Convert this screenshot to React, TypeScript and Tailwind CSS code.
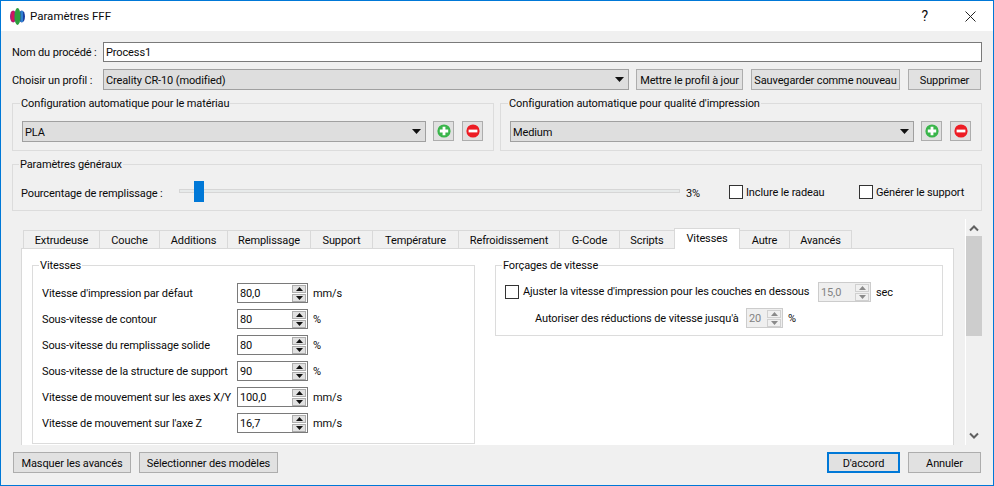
import React from "react";

function T({ className, children }: { className?: string; children: React.ReactNode }) {
  return <span className={`pt-[2px] whitespace-nowrap ${className ?? ""}`}>{children}</span>;
}

function Btn({ w, children, primary }: { w: string; children: React.ReactNode; primary?: boolean }) {
  return (
    <div className={`${w} h-[21px] shrink-0 flex items-center justify-center bg-[#e1e1e1] ${primary ? "border-2 border-[#0078d7]" : "border border-[#adadad]"}`}>
      <T>{children}</T>
    </div>
  );
}

function Tri() {
  return (
    <svg width="9" height="5" viewBox="0 0 9 5" className="shrink-0">
      <path d="M0 0H9L4.5 5Z" fill="#111" />
    </svg>
  );
}

function Combo({ w, text }: { w: string; text: string }) {
  return (
    <div className={`${w} h-[21px] shrink-0 flex items-center justify-between pl-[2px] pr-[4px] bg-[#dedede] border border-[#a0a0a0]`}>
      <T>{text}</T>
      <Tri />
    </div>
  );
}

function IconBtn({ kind }: { kind: "plus" | "minus" }) {
  return (
    <div className="w-[21px] h-[20px] shrink-0 flex items-center justify-center bg-[#e1e1e1] border border-[#adadad]">
      <svg width="14" height="14" viewBox="0 0 14 14">
        <circle cx="7" cy="7" r="6.6" fill={kind === "plus" ? "#39b54a" : "#ed1c24"} />
        {kind === "plus" ? (
          <path d="M5.6 2.8h2.8v2.8h2.8v2.8H8.4v2.8H5.6V8.4H2.8V5.6h2.8z" fill="#fff" />
        ) : (
          <rect x="2.6" y="5.6" width="8.8" height="2.8" fill="#fff" />
        )}
      </svg>
    </div>
  );
}

function Group({ title, className, bg, left, children }: { title: string; className: string; bg: string; left: string; children: React.ReactNode }) {
  return (
    <div className={`relative border ${className}`}>
      <span className={`absolute top-[-7px] ${left} ${bg} px-[1px] leading-[14px] whitespace-nowrap`}>{title}</span>
      {children}
    </div>
  );
}

function Spin({ w, value, disabled }: { w: string; value: string; disabled?: boolean }) {
  const arrow = disabled ? "#8a8a8a" : "#111";
  const bb = disabled ? "border-[#d0d0d0] bg-[#f0f0f0]" : "border-[#adadad] bg-[#e1e1e1]";
  return (
    <div className={`${w} h-[20px] shrink-0 flex items-center justify-between pl-[2px] pr-[1px] border ${disabled ? "border-[#cccccc] bg-[#efefef] text-[#838383]" : "border-[#7a7a7a] bg-white"}`}>
      <T>{value}</T>
      <div className="flex flex-col gap-[1px]">
        <div className={`w-[14px] h-[8px] flex items-center justify-center border ${bb}`}>
          <svg width="7" height="4" viewBox="0 0 7 4"><path d="M0 4H7L3.5 0Z" fill={arrow} /></svg>
        </div>
        <div className={`w-[14px] h-[8px] flex items-center justify-center border ${bb}`}>
          <svg width="7" height="4" viewBox="0 0 7 4"><path d="M0 0H7L3.5 4Z" fill={arrow} /></svg>
        </div>
      </div>
    </div>
  );
}

function Check() {
  return <div className="w-[14px] h-[14px] shrink-0 border border-[#333333] bg-white" />;
}

const speedRows = [
  ["Vitesse d'impression par défaut", "80,0", "mm/s"],
  ["Sous-vitesse de contour", "80", "%"],
  ["Sous-vitesse du remplissage solide", "80", "%"],
  ["Sous-vitesse de la structure de support", "90", "%"],
  ["Vitesse de mouvement sur les axes X/Y", "100,0", "mm/s"],
  ["Vitesse de mouvement sur l'axe Z", "16,7", "mm/s"],
];

const tabs = [
  ["Extrudeuse", "w-[76px]"],
  ["Couche", "w-[60px]"],
  ["Additions", "w-[68px]"],
  ["Remplissage", "w-[83px]"],
  ["Support", "w-[62px]"],
  ["Température", "w-[86px]"],
  ["Refroidissement", "w-[101px]"],
  ["G-Code", "w-[60px]"],
  ["Scripts", "w-[55px]"],
];

export default function App() {
  return (
    <div className="w-[994px] h-[486px] flex flex-col overflow-hidden border border-[#0078d7] bg-[#f0f0f0] text-[11px] leading-[16px] tracking-[-0.12px] text-[#0a0a0a] font-['Roboto','Noto_Sans',sans-serif]">
      <div className="h-[30px] shrink-0 bg-white flex items-center pl-[9px]">
        <svg width="15" height="17" viewBox="0 0 15 17" className="shrink-0">
          <ellipse cx="3.2" cy="8.5" rx="3.2" ry="6" fill="#a0207f" />
          <rect x="1.5" y="3.5" width="2.5" height="10" fill="#d4145a" />
          <ellipse cx="11.8" cy="8.5" rx="3.2" ry="6" fill="#1b3fa0" />
          <rect x="10.5" y="3" width="2.5" height="11" fill="#2f80d0" />
          <ellipse cx="7.5" cy="8.5" rx="3" ry="8.5" fill="#2e9e3e" />
        </svg>
        <span className="ml-[5px] text-[11.5px] tracking-normal">Paramètres FFF</span>
        <span className="ml-auto text-[14px]">?</span>
        <svg width="11" height="11" viewBox="0 0 11 11" className="ml-[37px] mr-[17px]">
          <path d="M0.5 0.5L10.5 10.5M10.5 0.5L0.5 10.5" stroke="#222" strokeWidth="1" fill="none" />
        </svg>
      </div>

      <div className="flex-1 flex flex-col px-[11px] pt-[11px] min-h-0">
        <div className="h-[20px] flex items-center">
          <T className="w-[91px] shrink-0">Nom du procédé :</T>
          <div className="flex-1 h-[20px] flex items-center pl-[2px] bg-white border border-[#7a7a7a]"><T>Process1</T></div>
        </div>

        <div className="h-[21px] mt-[7px] flex items-center">
          <T className="w-[91px] shrink-0">Choisir un profil :</T>
          <Combo w="w-[526px]" text="Creality CR-10 (modified)" />
          <div className="ml-[7px]"><Btn w="w-[107px]">Mettre le profil à jour</Btn></div>
          <div className="ml-[8px]"><Btn w="w-[149px]">Sauvegarder comme nouveau</Btn></div>
          <div className="ml-[8px]"><Btn w="w-[73px]">Supprimer</Btn></div>
        </div>

        <div className="mt-[13px] h-[48px] flex gap-[6px]">
          {[
            ["Configuration automatique pour le matériau", "PLA"],
            ["Configuration automatique pour qualité d'impression", "Medium"],
          ].map(([t, v]) => (
            <Group key={t} title={t} className="w-[482px] border-[#dcdcdc] flex items-start pt-[17px] pl-[9px]" bg="bg-[#f0f0f0]" left="left-[7px]">
              <Combo w="w-[404px]" text={v} />
              <div className="ml-[7px]"><IconBtn kind="plus" /></div>
              <div className="ml-[8px]"><IconBtn kind="minus" /></div>
            </Group>
          ))}
        </div>

        <Group title="Paramètres généraux" className="mt-[13px] h-[47px] shrink-0 border-[#dcdcdc] pt-[16px] pl-[8px]" bg="bg-[#f0f0f0]" left="left-[6px]">
          <div className="h-[21px] flex items-center">
            <span className="w-[158px] shrink-0 whitespace-nowrap mt-[5px]">Pourcentage de remplissage :</span>
            <div className="w-[501px] h-[4px] shrink-0 bg-[#e7eaea] border border-[#d6d6d6] flex items-center pl-[14px] mb-[1px]">
              <div className="w-[10px] h-[21px] shrink-0 bg-[#0078d7]" />
            </div>
            <span className="ml-[6px] w-[43px] shrink-0 mt-[5px]">3%</span>
            <Check />
            <T className="ml-[3px] w-[113px] shrink-0">Inclure le radeau</T>
            <Check />
            <T className="ml-[3px]">Générer le support</T>
          </div>
        </Group>

        <div className="mt-[8px] h-[226px] shrink-0 flex overflow-hidden">
          <div className="w-[942px] shrink-0 pl-[9px] pt-[11px]">
            <div className="h-[18px] flex items-end pl-[2px] relative z-10">
              {tabs.map(([t, w]) => (
                <div key={t} className={`${w} h-[18px] shrink-0 flex items-center justify-center bg-[#f0f0f0] border border-b-0 border-r-0 border-[#d9d9d9]`}><T>{t}</T></div>
              ))}
              <div className="w-[66px] h-[21px] mb-[-1px] shrink-0 flex items-start pt-[2px] justify-center whitespace-nowrap bg-white border border-b-0 border-[#d9d9d9]">Vitesses</div>
              <div className="w-[49px] h-[18px] shrink-0 flex items-center justify-center bg-[#f0f0f0] border-t border-[#d9d9d9]"><T>Autre</T></div>
              <div className="w-[63px] h-[18px] shrink-0 flex items-center justify-center bg-[#f0f0f0] border border-b-0 border-[#d9d9d9]"><T>Avancés</T></div>
            </div>
            <div className="w-[933px] h-[230px] bg-white border border-[#d9d9d9] pl-[10px] pt-[16px] flex items-start gap-[20px]">
              <Group title="Vitesses" className="w-[443px] h-[179px] shrink-0 border-[#dcdcdc] pl-[9px] pt-[17px] flex flex-col gap-[6px]" bg="bg-white" left="left-[6px]">
                {speedRows.map(([l, v, u]) => (
                  <div key={l} className="h-[20px] flex items-center">
                    <T className="w-[195px] shrink-0">{l}</T>
                    <Spin w="w-[71px]" value={v} />
                    <T className="ml-[5px]">{u}</T>
                  </div>
                ))}
              </Group>
              <Group title="Forçages de vitesse" className="w-[448px] h-[71px] shrink-0 border-[#dcdcdc]" bg="bg-white" left="left-[6px]">
                <div className="h-[20px] mt-[16px] ml-[9px] flex items-center">
                  <Check />
                  <span className="ml-[4px] w-[295px] shrink-0 whitespace-nowrap">Ajuster la vitesse d'impression pour les couches en dessous</span>
                  <Spin w="w-[53px]" value="15,0" disabled />
                  <T className="ml-[5px]">sec</T>
                </div>
                <div className="h-[20px] mt-[6px] ml-[39px] flex items-center">
                  <T className="w-[211px] shrink-0">Autoriser des réductions de vitesse jusqu'à</T>
                  <Spin w="w-[37px]" value="20" disabled />
                  <T className="ml-[5px]">%</T>
                </div>
              </Group>
            </div>
          </div>
          <div className="ml-[11px] w-[17px] h-full shrink-0 flex flex-col items-center border-l border-white">
            <svg width="10" height="7" viewBox="0 0 10 7" className="mt-[6px] shrink-0">
              <path d="M1 5.5L5 1.5L9 5.5" stroke="#606060" strokeWidth="2" fill="none" />
            </svg>
            <div className="w-full h-[100px] mt-[4px] shrink-0 bg-[#cdcdcd]" />
            <svg width="10" height="7" viewBox="0 0 10 7" className="mt-auto mb-[6px] shrink-0">
              <path d="M1 1.5L5 5.5L9 1.5" stroke="#606060" strokeWidth="2" fill="none" />
            </svg>
          </div>
        </div>

        <div className="mt-[7px] flex items-center pl-[1px] pr-[1px]">
          <Btn w="w-[118px]">Masquer les avancés</Btn>
          <div className="ml-[8px]"><Btn w="w-[139px]">Sélectionner des modèles</Btn></div>
          <div className="ml-auto"><Btn w="w-[73px]" primary>D'accord</Btn></div>
          <div className="ml-[8px]"><Btn w="w-[73px]">Annuler</Btn></div>
        </div>
      </div>
    </div>
  );
}
